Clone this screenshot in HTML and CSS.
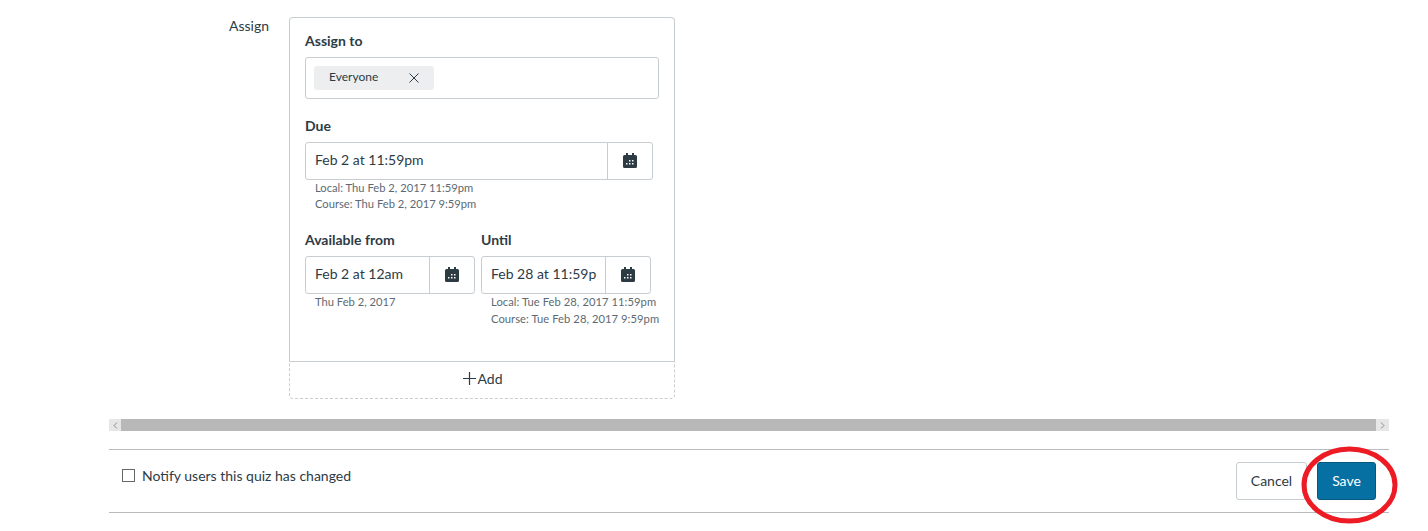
FILE: index.html
```html
<!DOCTYPE html>
<html lang="en">
<head>
<meta charset="utf-8">
<title>Assign</title>
<link rel="stylesheet" href="styles.css">
</head>
<body>
<main class="page">
  <section class="assign-row">
    <div class="assign-label">Assign</div>
    <div class="card">
      <div class="card-body">
        <div class="label label-first">Assign to</div>
        <div class="token-box">
          <span class="chip"><span class="chip-text">Everyone</span>
            <svg class="chip-x" viewBox="0 0 10 10" width="10" height="10"><path d="M.5.5l9 9M9.5.5l-9 9" fill="none" stroke="#2d3b45" stroke-width="1"/></svg>
          </span>
        </div>
        <div class="label label-due">Due</div>
        <div class="date-field date-due">
          <span class="date-value">Feb 2 at 11:59pm</span>
          <span class="date-btn"><svg class="cal" viewBox="0 0 14 15" width="14" height="15"><use href="#cal"/></svg></span>
        </div>
        <div class="hint hint-due">Local: Thu Feb 2, 2017 11:59pm</div>
        <div class="hint">Course: Thu Feb 2, 2017 9:59pm</div>
        <div class="date-pair">
          <div class="date-col">
            <div class="label">Available from</div>
            <div class="date-field date-small">
              <span class="date-value">Feb 2 at 12am</span>
              <span class="date-btn"><svg class="cal" viewBox="0 0 14 15" width="14" height="15"><use href="#cal"/></svg></span>
            </div>
            <div class="hint hint-due">Thu Feb 2, 2017</div>
          </div>
          <div class="date-col">
            <div class="label">Until</div>
            <div class="date-field date-small">
              <span class="date-value">Feb 28 at 11:59p</span>
              <span class="date-btn"><svg class="cal" viewBox="0 0 14 15" width="14" height="15"><use href="#cal"/></svg></span>
            </div>
            <div class="hint hint-due nowrap">Local: Tue Feb 28, 2017 11:59pm</div>
            <div class="hint nowrap">Course: Tue Feb 28, 2017 9:59pm</div>
          </div>
        </div>
      </div>
      <div class="add-row">
        <svg viewBox="0 0 13 13" width="13" height="13"><path d="M6.5 0v13M0 6.5h13" fill="none" stroke="#2d3b45" stroke-width="1.2"/></svg><span>Add</span>
      </div>
    </div>
  </section>

  <div class="scrollbar">
    <span class="scroll-arrow"><svg viewBox="0 0 5 7" width="5" height="7"><path d="M4 .5L1 3.500l3 3" fill="none" stroke="#8a8a8a" stroke-width="1"/></svg></span>
    <span class="scroll-thumb"></span>
    <span class="scroll-arrow scroll-arrow-end"><svg viewBox="0 0 5 7" width="5" height="7"><path d="M1 .5l3 3-3 3" fill="none" stroke="#8a8a8a" stroke-width="1"/></svg></span>
  </div>

  <footer class="footer">
    <label class="notify"><span class="checkbox"></span><span>Notify users this quiz has changed</span></label>
    <div class="actions">
      <span class="btn btn-cancel">Cancel</span>
      <span class="btn btn-save">Save</span>
    </div>
  </footer>
</main>

<svg class="annotation" viewBox="0 0 97 78" width="97" height="78"><ellipse cx="48.500" cy="39" rx="45.500" ry="36" fill="none" stroke="#ed1c24" stroke-width="5"/></svg>

<svg class="defs" width="0" height="0">
  <symbol id="cal" viewBox="0 0 14 15">
    <path fill="#2d3b45" fill-rule="evenodd" d="M3 0h2v2h4V0h2v2h1.500A1.500 1.500 0 0 1 14 3.500v10a1.500 1.500 0 0 1-1.500 1.500h-11A1.500 1.500 0 0 1 0 13.500v-10A1.500 1.500 0 0 1 1.500 2H3zM6 7v1.500h1.500V7zm3 0v1.500h1.500V7zm-3 3v1.500h1.500V10zm3 0v1.500h1.500V10zm-6 0v1.500h1.500V10z"/>
  </symbol>
</svg>
</body>
</html>
```
FILE: styles.css
```css
* { box-sizing: border-box; }
html, body { margin: 0; padding: 0; background: #fff; }
body {
  width: 1428px;
  height: 531px;
  overflow: hidden;
  position: relative;
  font-family: Lato, "Open Sans", sans-serif;
  color: #2d3b45;
}
.page { padding: 17px 39px 0 109px; }
.assign-row { display: flex; align-items: flex-start; }
.assign-label {
  width: 160px;
  text-align: right;
  font-size: 14px;
  line-height: 20px;
  margin-top: -1px;
  color: #2d3b45;
}
.card {
  width: 386px;
  height: 382px;
  margin-left: 20px;
  display: flex;
  flex-direction: column;
}
.card-body {
  flex: 1;
  padding: 13px 15px 0;
  border: 1px solid #c7cdd1;
  border-bottom: none;
  border-radius: 4px 4px 0 0;
}
.label {
  font-size: 14px;
  font-weight: 700;
  line-height: 20px;
  height: 20px;
  margin-bottom: 6px;
}
.label-due { margin-top: 17px; }
.token-box {
  height: 42px;
  width: 354px;
  border: 1px solid #c7cdd1;
  border-radius: 3px;
  padding: 8px;
}
.chip {
  display: flex;
  align-items: center;
  justify-content: space-between;
  width: 120px;
  height: 24px;
  padding: 0 15px;
  background: #eceeef;
  border-radius: 3px;
  font-size: 12px;
}
.chip-text { padding-bottom: 4px; }
.date-field {
  display: flex;
  height: 38px;
  border: 1px solid #c7cdd1;
  border-radius: 3px;
}
.date-due { width: 348px; }
.date-small { width: 170px; }
.date-value {
  flex: 1;
  min-width: 0;
  padding-left: 9px;
  font-size: 14px;
  line-height: 34px;
  white-space: nowrap;
  overflow: hidden;
}
.date-btn {
  flex: none;
  width: 45px;
  padding-bottom: 2px;
  border-left: 1px solid #c7cdd1;
  display: flex;
  align-items: center;
  justify-content: center;
}
.hint {
  font-size: 11.2px;
  line-height: 16px;
  padding-left: 10px;
  color: #5d6a73;
}
.nowrap { white-space: nowrap; letter-spacing: 0.06px; }
.nowrap + .nowrap { margin-top: 1px; }
.date-pair { display: flex; gap: 6px; margin-top: 18px; }
.date-col { width: 170px; }
.add-row {
  flex: none;
  height: 38px;
  padding: 0 0 3px 2px;
  border-top: 1px solid #c7cdd1;
  border-left: 1px dashed #c7cdd1;
  border-right: 1px dashed #c7cdd1;
  border-bottom: 1px dashed #c7cdd1;
  border-radius: 0 0 4px 4px;
  display: flex;
  align-items: center;
  justify-content: center;
  font-size: 14px;
  gap: 1px;
}
.scrollbar {
  display: flex;
  height: 12px;
  margin-top: 20px;
  background: #e6e6e6;
}
.scroll-arrow {
  flex: none;
  width: 12px;
  display: flex;
  align-items: center;
  justify-content: center;
  background: #e6e6e6;
}
.scroll-arrow-end { width: 13px; }
.scroll-thumb { flex: 1; background: #b8b8b8; }
.footer {
  margin-top: 18px;
  height: 64px;
  border-top: 1px solid #b8bcbf;
  border-bottom: 1px solid #b8bcbf;
  display: flex;
  align-items: center;
  justify-content: space-between;
  padding: 0 13px;
}
.notify {
  display: flex;
  align-items: center;
  gap: 7px;
  font-size: 14px;
  margin-top: -12px;
}
.checkbox {
  width: 13px;
  height: 13px;
  border: 1px solid #666;
  background: #fff;
}
.actions { display: flex; gap: 10px; }
.btn {
  height: 38px;
  padding-bottom: 1px;
  border-radius: 3px;
  font-size: 14px;
  display: flex;
  align-items: center;
  justify-content: center;
}
.btn-cancel {
  width: 71px;
  background: #fff;
  border: 1px solid #c7cdd1;
}
.btn-save {
  width: 59px;
  background: #0770a3;
  border: 1px solid #07577e;
  color: #fff;
}
.annotation {
  position: absolute;
  left: 1301px;
  top: 446px;
}
.defs { position: absolute; }
```
